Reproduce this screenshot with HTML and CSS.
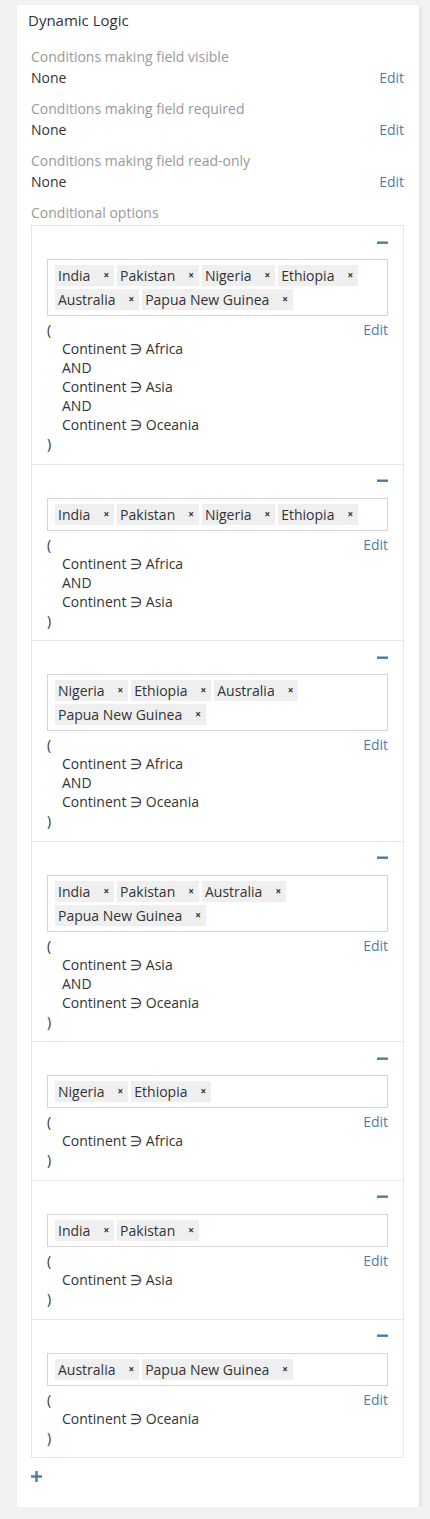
FILE: index.html
```html
<!DOCTYPE html>
<html>
<head>
<meta charset="utf-8">
<link rel="stylesheet" href="styles.css">
</head>
<body>
<div class="panel">
  <div class="panel-heading"><h4 class="panel-title">Dynamic Logic</h4></div>
  <div class="panel-body">
    <div class="cell">
      <div class="label">Conditions making field visible</div>
      <div class="value-row"><span>None</span><a class="edit">Edit</a></div>
    </div>
    <div class="cell">
      <div class="label">Conditions making field required</div>
      <div class="value-row"><span>None</span><a class="edit">Edit</a></div>
    </div>
    <div class="cell">
      <div class="label">Conditions making field read-only</div>
      <div class="value-row"><span>None</span><a class="edit">Edit</a></div>
    </div>
    <div class="cell last">
      <div class="label">Conditional options</div>
      <div class="options-list">

        <div class="option-item">
          <div class="item-head"><a class="remove-btn"><svg width="11" height="11" viewBox="0 0 11 11"><rect x="0" y="4.5" width="11" height="2.4" fill="#4d79a4"/></svg></a></div>
          <div class="tag-box">
            <span class="tag">India<span class="x">×</span></span>
            <span class="tag">Pakistan<span class="x">×</span></span>
            <span class="tag">Nigeria<span class="x">×</span></span>
            <span class="tag">Ethiopia<span class="x">×</span></span>
            <span class="tag">Australia<span class="x">×</span></span>
            <span class="tag">Papua New Guinea<span class="x">×</span></span>
          </div>
          <div class="conditions">
            <div class="cond-open"><span>(</span><a class="edit">Edit</a></div>
            <div class="cond-inner">Continent ∋ Africa</div>
            <div class="cond-inner">AND</div>
            <div class="cond-inner">Continent ∋ Asia</div>
            <div class="cond-inner">AND</div>
            <div class="cond-inner">Continent ∋ Oceania</div>
            <div class="cond-close">)</div>
          </div>
        </div>

        <div class="option-item">
          <div class="item-head"><a class="remove-btn"><svg width="11" height="11" viewBox="0 0 11 11"><rect x="0" y="4.5" width="11" height="2.4" fill="#4d79a4"/></svg></a></div>
          <div class="tag-box">
            <span class="tag">India<span class="x">×</span></span>
            <span class="tag">Pakistan<span class="x">×</span></span>
            <span class="tag">Nigeria<span class="x">×</span></span>
            <span class="tag">Ethiopia<span class="x">×</span></span>
          </div>
          <div class="conditions">
            <div class="cond-open"><span>(</span><a class="edit">Edit</a></div>
            <div class="cond-inner">Continent ∋ Africa</div>
            <div class="cond-inner">AND</div>
            <div class="cond-inner">Continent ∋ Asia</div>
            <div class="cond-close">)</div>
          </div>
        </div>

        <div class="option-item">
          <div class="item-head"><a class="remove-btn"><svg width="11" height="11" viewBox="0 0 11 11"><rect x="0" y="4.5" width="11" height="2.4" fill="#4d79a4"/></svg></a></div>
          <div class="tag-box">
            <span class="tag">Nigeria<span class="x">×</span></span>
            <span class="tag">Ethiopia<span class="x">×</span></span>
            <span class="tag">Australia<span class="x">×</span></span>
            <span class="tag">Papua New Guinea<span class="x">×</span></span>
          </div>
          <div class="conditions">
            <div class="cond-open"><span>(</span><a class="edit">Edit</a></div>
            <div class="cond-inner">Continent ∋ Africa</div>
            <div class="cond-inner">AND</div>
            <div class="cond-inner">Continent ∋ Oceania</div>
            <div class="cond-close">)</div>
          </div>
        </div>

        <div class="option-item">
          <div class="item-head"><a class="remove-btn"><svg width="11" height="11" viewBox="0 0 11 11"><rect x="0" y="4.5" width="11" height="2.4" fill="#4d79a4"/></svg></a></div>
          <div class="tag-box">
            <span class="tag">India<span class="x">×</span></span>
            <span class="tag">Pakistan<span class="x">×</span></span>
            <span class="tag">Australia<span class="x">×</span></span>
            <span class="tag">Papua New Guinea<span class="x">×</span></span>
          </div>
          <div class="conditions">
            <div class="cond-open"><span>(</span><a class="edit">Edit</a></div>
            <div class="cond-inner">Continent ∋ Asia</div>
            <div class="cond-inner">AND</div>
            <div class="cond-inner">Continent ∋ Oceania</div>
            <div class="cond-close">)</div>
          </div>
        </div>

        <div class="option-item">
          <div class="item-head"><a class="remove-btn"><svg width="11" height="11" viewBox="0 0 11 11"><rect x="0" y="4.5" width="11" height="2.4" fill="#4d79a4"/></svg></a></div>
          <div class="tag-box">
            <span class="tag">Nigeria<span class="x">×</span></span>
            <span class="tag">Ethiopia<span class="x">×</span></span>
          </div>
          <div class="conditions">
            <div class="cond-open"><span>(</span><a class="edit">Edit</a></div>
            <div class="cond-inner">Continent ∋ Africa</div>
            <div class="cond-close">)</div>
          </div>
        </div>

        <div class="option-item">
          <div class="item-head"><a class="remove-btn"><svg width="11" height="11" viewBox="0 0 11 11"><rect x="0" y="4.5" width="11" height="2.4" fill="#4d79a4"/></svg></a></div>
          <div class="tag-box">
            <span class="tag">India<span class="x">×</span></span>
            <span class="tag">Pakistan<span class="x">×</span></span>
          </div>
          <div class="conditions">
            <div class="cond-open"><span>(</span><a class="edit">Edit</a></div>
            <div class="cond-inner">Continent ∋ Asia</div>
            <div class="cond-close">)</div>
          </div>
        </div>

        <div class="option-item">
          <div class="item-head"><a class="remove-btn"><svg width="11" height="11" viewBox="0 0 11 11"><rect x="0" y="4.5" width="11" height="2.4" fill="#4d79a4"/></svg></a></div>
          <div class="tag-box">
            <span class="tag">Australia<span class="x">×</span></span>
            <span class="tag">Papua New Guinea<span class="x">×</span></span>
          </div>
          <div class="conditions">
            <div class="cond-open"><span>(</span><a class="edit">Edit</a></div>
            <div class="cond-inner">Continent ∋ Oceania</div>
            <div class="cond-close">)</div>
          </div>
        </div>

      </div>
      <a class="add-btn"><svg width="11" height="11" viewBox="0 0 11 11"><rect x="0" y="4.3" width="11" height="2.4" fill="#4d79a4"/><rect x="4.3" y="0" width="2.4" height="11" fill="#4d79a4"/></svg></a>
    </div>
  </div>
</div>
</body>
</html>
```
FILE: styles.css
```css
html, body {
  margin: 0;
  padding: 0;
  background: #f2f2f2;
}
body {
  padding: 5px 0 0 17px;
  font-family: "Open Sans", "Noto Sans", "DejaVu Sans", sans-serif;
  font-size: 14px;
  color: #333;
  line-height: 19px;
}
.panel {
  width: 402px;
  background: #fff;
  box-shadow: 2px 2px 4px rgba(0, 0, 0, 0.09);
  padding-bottom: 21px;
}
.panel-heading {
  padding: 5px 11px 0 11px;
}
.panel-title {
  margin: 0;
  font-size: 15px;
  font-weight: normal;
  line-height: 20px;
  color: #333;
}
.panel-body {
  padding: 17px 15px 0 14px;
}
.cell {
  margin-bottom: 11px;
}
.cell.last {
  margin-bottom: 0;
}
.label {
  color: #999;
  line-height: 19px;
  margin-bottom: 2px;
}
.value-row {
  display: flex;
  justify-content: space-between;
  line-height: 20px;
}
.edit {
  color: #4c7eae;
  text-decoration: none;
}
.options-list {
  margin-top: 3px;
  border: 1px solid #e6e6e6;
}
.option-item {
  padding: 6px 15px 10.6px 15px;
  border-top: 1px solid #e6e6e6;
}
.option-item:first-child {
  border-top: none;
}
.item-head {
  height: 20px;
  display: flex;
  justify-content: flex-end;
  align-items: center;
}
.remove-btn {
  display: flex;
  width: 11px;
  height: 11px;
}
.tag-box {
  margin-top: 7px;
  border: 1px solid #d5d5d5;
  padding: 5px 7px;
  display: flex;
  flex-wrap: wrap;
  gap: 3px;
}
.tag {
  display: inline-flex;
  align-items: center;
  background: #efefef;
  height: 21px;
  line-height: 21px;
  padding: 0 5px 0 3px;
}
.x {
  font-size: 10px;
  font-weight: bold;
  margin-left: 13px;
  color: #333;
}
.conditions {
  margin-top: 4px;
}
.cond-open {
  display: flex;
  justify-content: space-between;
}
.cond-inner {
  padding-left: 15px;
}
.add-btn {
  display: flex;
  align-items: center;
  height: 20px;
  margin-top: 8px;
  padding-left: 0;
}
```
